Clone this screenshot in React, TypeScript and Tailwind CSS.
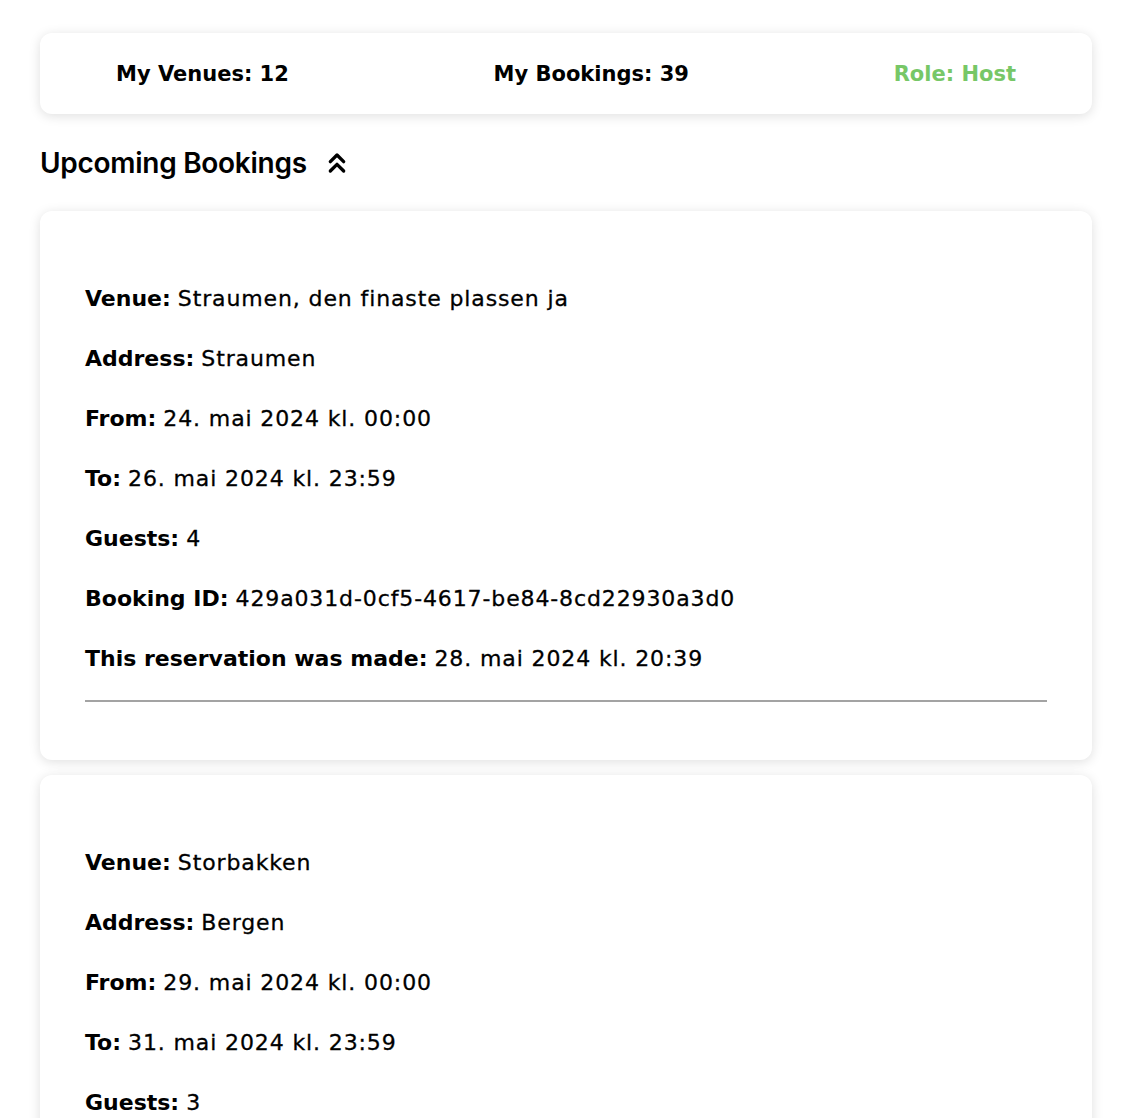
import React from "react";
import { ChevronsUp } from "lucide-react";

type Booking = {
  venue: string;
  address: string;
  from: string;
  to: string;
  guests: number;
  id: string;
  made: string;
};

const bookings: Booking[] = [
  {
    venue: "Straumen, den finaste plassen ja",
    address: "Straumen",
    from: "24. mai 2024 kl. 00:00",
    to: "26. mai 2024 kl. 23:59",
    guests: 4,
    id: "429a031d-0cf5-4617-be84-8cd22930a3d0",
    made: "28. mai 2024 kl. 20:39",
  },
  {
    venue: "Storbakken",
    address: "Bergen",
    from: "29. mai 2024 kl. 00:00",
    to: "31. mai 2024 kl. 23:59",
    guests: 3,
    id: "7f1c2b9e-3a4d-4e21-9b07-5d6e8a1f2c34",
    made: "28. mai 2024 kl. 21:02",
  },
];

const Line = ({ label, value }: { label: string; value: React.ReactNode }) => (
  <p className="text-[22px] leading-[33px]">
    <span className="font-bold">{label}:</span>{" "}
    <span className="tracking-[0.04em] [-webkit-text-stroke:0.3px_black]">{value}</span>
  </p>
);

const BookingCard = ({ b }: { b: Booking }) => (
  <div className="bg-white rounded-xl shadow-[0_2px_12px_rgba(0,0,0,0.13)] pt-[71px] px-[45px] pb-[58px]">
    <div className="flex flex-col gap-[27px]">
      <Line label="Venue" value={b.venue} />
      <Line label="Address" value={b.address} />
      <Line label="From" value={b.from} />
      <Line label="To" value={b.to} />
      <Line label="Guests" value={b.guests} />
      <Line label="Booking ID" value={b.id} />
      <Line label="This reservation was made" value={b.made} />
    </div>
    <div className="h-[2px] bg-[#a3a3a3] mt-[25px]" />
  </div>
);

export default function App() {
  return (
    <div
      className="min-h-screen bg-white text-black pl-10 pr-[50px] pt-[33px] pb-10"
      style={{ fontFamily: "'DejaVu Sans', 'Noto Sans', sans-serif" }}
    >
      <div className="bg-white rounded-xl shadow-[0_2px_12px_rgba(0,0,0,0.13)] h-[81px] px-[76px] pt-[2px] flex items-center justify-between text-[21px] font-bold">
        <span>My Venues: 12</span>
        <span>My Bookings: 39</span>
        <span className="text-[#77c767]">Role: Host</span>
      </div>

      <div className="flex items-center gap-[14px] mt-[32px] mb-[31px] h-[34px]">
        <h2 className="text-[28px] font-semibold leading-none font-[Inter,sans-serif] tracking-[-0.01em]">
          Upcoming Bookings
        </h2>
        <ChevronsUp size={32} strokeWidth={2.5} />
      </div>

      <div className="flex flex-col gap-[15px]">
        {bookings.map((b) => (
          <BookingCard key={b.id} b={b} />
        ))}
      </div>
    </div>
  );
}
